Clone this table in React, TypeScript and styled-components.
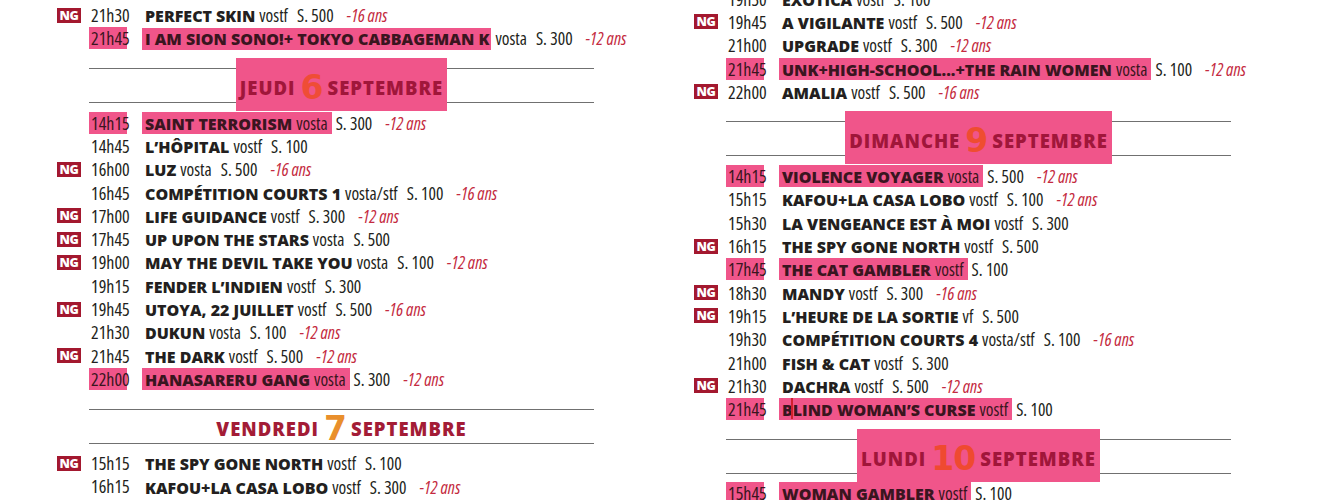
import React from 'react';
import styled, { createGlobalStyle } from 'styled-components';

const PINK = '#f0558a';
const INK = '#231f20';
const RED = '#c42a40';
const WINE = '#a3182f';

const SANS = `"Open Sans", "DejaVu Sans", sans-serif`;

const GlobalStyle = createGlobalStyle`
  html, body {
    margin: 0;
    padding: 0;
    background: #fff;
  }
  body {
    width: 1320px;
    height: 500px;
    overflow: hidden;
  }
`;

const Page = styled.div`
  display: flex;
  gap: 100px;
  padding-left: 57px;
  height: 500px;
  overflow: hidden;
`;

const Column = styled.div<{ $offset: number }>`
  width: 537px;
  flex: none;
  margin-top: ${({ $offset }) => $offset}px;
`;

// one screening
const Row = styled.div`
  display: flex;
  align-items: center;
  height: 23.3px;
`;

const BadgeCell = styled.div`
  width: 32px;
  flex: none;
  display: flex;
  align-items: center;
`;

const Badge = styled.span`
  display: inline-flex;
  align-items: center;
  justify-content: center;
  width: 24px;
  height: 15px;
  background: ${WINE};
  color: #fff;
  font-family: ${SANS};
  font-weight: 800;
  font-size: 12.5px;
  letter-spacing: -0.4px;
`;

const TimeCell = styled.div`
  width: 56px;
  flex: none;
  display: flex;
  align-items: center;
`;

const TimeText = styled.span<{ $hl: boolean }>`
  display: inline-block;
  width: 38px;
  height: 22px;
  line-height: 22px;
  padding-left: 2px;
  box-sizing: border-box;
  background: ${({ $hl }) => ($hl ? PINK : 'transparent')};
  color: ${({ $hl }) => ($hl ? '#3a1520' : INK)};
  font-family: ${SANS};
  font-stretch: 75%;
  font-weight: 500;
  font-size: 18px;
  white-space: nowrap;
`;

const Info = styled.div`
  display: flex;
  align-items: baseline;
  white-space: nowrap;
  font-family: ${SANS};
  font-stretch: 75%;
  font-weight: 500;
  font-size: 17.5px;
  color: ${INK};
`;

const Marker = styled.span<{ $tight?: boolean }>`
  position: relative;
  display: inline-flex;
  align-items: baseline;
  height: 22px;
  line-height: 22px;
  margin-left: -3px;
  padding: 0 ${({ $tight }) => ($tight ? 2 : 4)}px 0 3px;
  background: ${PINK};
  color: #3a1520;
`;

const Title = styled.span`
  font-family: ${SANS};
  font-stretch: 100%;
  font-weight: 800;
  font-size: 16px;
`;

const Lang = styled.span`
  margin-left: 4px;
`;

const Room = styled.span<{ $gap: number }>`
  margin-left: ${({ $gap }) => $gap}px;
`;

const Age = styled.span`
  margin-left: 13px;
  color: ${RED};
  font-style: italic;
`;

const Scribble = styled.span`
  position: absolute;
  left: 12px;
  top: 0;
  width: 2px;
  height: 21px;
  background: #d0202e;
`;

// day heading between two rules
const DayHeader = styled.div`
  margin: 18px 0 8px 32px;
  height: 33px;
  border-top: 1px solid #707070;
  border-bottom: 1px solid #707070;
  display: flex;
  justify-content: center;
`;

const DayLabel = styled.div<{ $hl: boolean }>`
  display: flex;
  align-items: center;
  gap: 5px;
  margin: -11px 0 -9px;
  padding: 6px 4px 0;
  background: ${({ $hl }) => ($hl ? PINK : 'transparent')};
  color: ${({ $hl }) => ($hl ? '#a0163a' : '#a31c36')};
  font-family: ${SANS};
  font-weight: 800;
  font-size: 18.5px;
  letter-spacing: 1px;
`;

const DayNum = styled.span<{ $color: string }>`
  font-family: "DejaVu Sans", sans-serif;
  font-weight: bold;
  font-size: 33px;
  line-height: 1;
  letter-spacing: -1px;
  color: ${({ $color }) => $color};
`;

type Show = {
  ng?: boolean;
  time: string;
  title: string;
  lang: string;
  room: string;
  age?: string;
  hl?: 'title' | 'all';
  mark?: boolean;
};

type Day = { day: string; num: string; hl: boolean; numColor: string };

type Item = Show | Day;

const isDay = (i: Item): i is Day => 'day' in i;

const left: Item[] = [
  { ng: true, time: '21h30', title: 'PERFECT SKIN', lang: 'vostf', room: '500', age: '-16 ans' },
  { time: '21h45', title: 'I AM SION SONO!+ TOKYO CABBAGEMAN K', lang: 'vosta', room: '300', age: '-12 ans', hl: 'title' },
  { day: 'JEUDI', num: '6', hl: true, numColor: '#ef4d36' },
  { time: '14h15', title: 'SAINT TERRORISM', lang: 'vosta', room: '300', age: '-12 ans', hl: 'all' },
  { time: '14h45', title: 'L’HÔPITAL', lang: 'vostf', room: '100' },
  { ng: true, time: '16h00', title: 'LUZ', lang: 'vosta', room: '500', age: '-16 ans' },
  { time: '16h45', title: 'COMPÉTITION COURTS 1', lang: 'vosta/stf', room: '100', age: '-16 ans' },
  { ng: true, time: '17h00', title: 'LIFE GUIDANCE', lang: 'vostf', room: '300', age: '-12 ans' },
  { ng: true, time: '17h45', title: 'UP UPON THE STARS', lang: 'vosta', room: '500' },
  { ng: true, time: '19h00', title: 'MAY THE DEVIL TAKE YOU', lang: 'vosta', room: '100', age: '-12 ans' },
  { time: '19h15', title: 'FENDER L’INDIEN', lang: 'vostf', room: '300' },
  { ng: true, time: '19h45', title: 'UTOYA, 22 JUILLET', lang: 'vostf', room: '500', age: '-16 ans' },
  { time: '21h30', title: 'DUKUN', lang: 'vosta', room: '100', age: '-12 ans' },
  { ng: true, time: '21h45', title: 'THE DARK', lang: 'vostf', room: '500', age: '-12 ans' },
  { time: '22h00', title: 'HANASARERU GANG', lang: 'vosta', room: '300', age: '-12 ans', hl: 'all' },
  { day: 'VENDREDI', num: '7', hl: false, numColor: '#e98f2c' },
  { ng: true, time: '15h15', title: 'THE SPY GONE NORTH', lang: 'vostf', room: '100' },
  { time: '16h15', title: 'KAFOU+LA CASA LOBO', lang: 'vostf', room: '300', age: '-12 ans' },
];

const right: Item[] = [
  { time: '19h30', title: 'EXOTICA', lang: 'vostf', room: '100' },
  { ng: true, time: '19h45', title: 'A VIGILANTE', lang: 'vostf', room: '500', age: '-12 ans' },
  { time: '21h00', title: 'UPGRADE', lang: 'vostf', room: '300', age: '-12 ans' },
  { time: '21h45', title: 'UNK+HIGH-SCHOOL...+THE RAIN WOMEN', lang: 'vosta', room: '100', age: '-12 ans', hl: 'all' },
  { ng: true, time: '22h00', title: 'AMALIA', lang: 'vostf', room: '500', age: '-16 ans' },
  { day: 'DIMANCHE', num: '9', hl: true, numColor: '#ef4d30' },
  { time: '14h15', title: 'VIOLENCE VOYAGER', lang: 'vosta', room: '500', age: '-12 ans', hl: 'all' },
  { time: '15h15', title: 'KAFOU+LA CASA LOBO', lang: 'vostf', room: '100', age: '-12 ans' },
  { time: '15h30', title: 'LA VENGEANCE EST À MOI', lang: 'vostf', room: '300' },
  { ng: true, time: '16h15', title: 'THE SPY GONE NORTH', lang: 'vostf', room: '500' },
  { time: '17h45', title: 'THE CAT GAMBLER', lang: 'vostf', room: '100', hl: 'all' },
  { ng: true, time: '18h30', title: 'MANDY', lang: 'vostf', room: '300', age: '-16 ans' },
  { ng: true, time: '19h15', title: 'L’HEURE DE LA SORTIE', lang: 'vf', room: '500' },
  { time: '19h30', title: 'COMPÉTITION COURTS 4', lang: 'vosta/stf', room: '100', age: '-16 ans' },
  { time: '21h00', title: 'FISH & CAT', lang: 'vostf', room: '300' },
  { ng: true, time: '21h30', title: 'DACHRA', lang: 'vostf', room: '500', age: '-12 ans' },
  { time: '21h45', title: 'BLIND WOMAN’S CURSE', lang: 'vostf', room: '100', hl: 'all', mark: true },
  { day: 'LUNDI', num: '10', hl: true, numColor: '#ef4a30' },
  { time: '15h45', title: 'WOMAN GAMBLER', lang: 'vostf', room: '100', hl: 'all' },
];

function ShowRow({ s }: { s: Show }) {
  const title = <Title>{s.title}</Title>;
  let main: React.ReactNode;
  if (s.hl === 'title') {
    main = (
      <>
        <Marker $tight>{title}</Marker>
        <Lang>{s.lang}</Lang>
      </>
    );
  } else if (s.hl === 'all') {
    main = (
      <Marker>
        {s.mark && <Scribble />}
        {title}
        <Lang>{s.lang}</Lang>
      </Marker>
    );
  } else {
    main = (
      <>
        {title}
        <Lang>{s.lang}</Lang>
      </>
    );
  }
  return (
    <Row>
      <BadgeCell>{s.ng && <Badge>NG</Badge>}</BadgeCell>
      <TimeCell>
        <TimeText $hl={!!s.hl}>{s.time}</TimeText>
      </TimeCell>
      <Info>
        {main}
        <Room $gap={s.hl === 'all' ? 4 : 9}>S. {s.room}</Room>
        {s.age && <Age>{s.age}</Age>}
      </Info>
    </Row>
  );
}

function DayRow({ d }: { d: Day }) {
  return (
    <DayHeader>
      <DayLabel $hl={d.hl}>
        <span>{d.day}</span>
        <DayNum $color={d.numColor}>{d.num}</DayNum>
        <span>SEPTEMBRE</span>
      </DayLabel>
    </DayHeader>
  );
}

function Programme({ items, offset }: { items: Item[]; offset: number }) {
  return (
    <Column $offset={offset}>
      {items.map((it, i) =>
        isDay(it) ? <DayRow key={i} d={it} /> : <ShowRow key={i} s={it} />
      )}
    </Column>
  );
}

export default function App() {
  return (
    <>
      <GlobalStyle />
      <Page>
        <Programme items={left} offset={3.4} />
        <Programme items={right} offset={-13} />
      </Page>
    </>
  );
}
